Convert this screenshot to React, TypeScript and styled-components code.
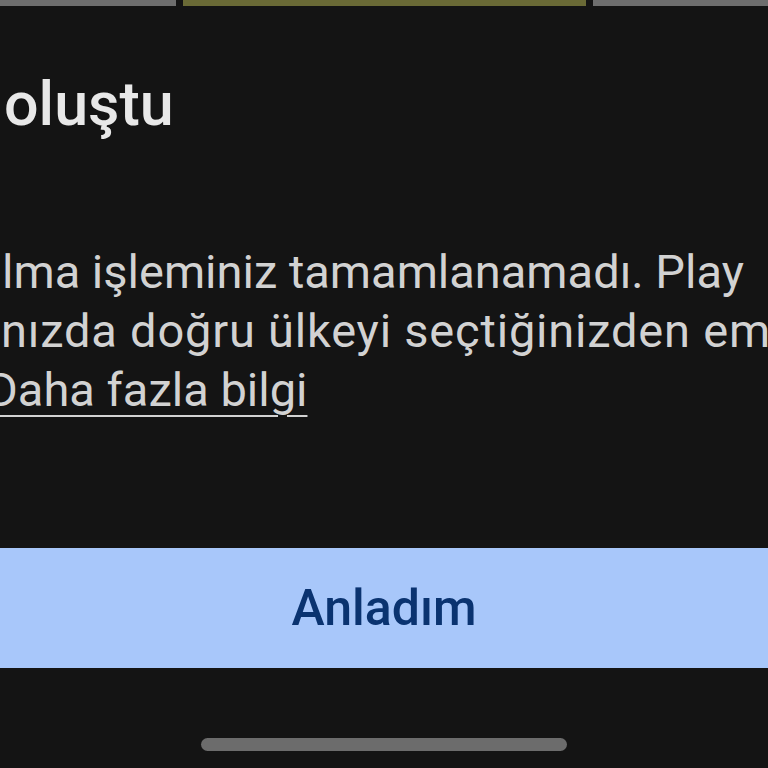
import { styled, createGlobalStyle } from "styled-components";

const GlobalStyle = createGlobalStyle`
    html, body {
        margin: 0;
        padding: 0;
        background: #141414;
        overflow: hidden;
    }
`;

const Page = styled.div`
    width: 768px;
    height: 768px;
    display: flex;
    flex-direction: column;
    background: #141414;
    overflow: hidden;
    font-family: Roboto, "Noto Sans", sans-serif;
`;

const Progress = styled.div`
    display: flex;
    gap: 7px;
    height: 6px;
`;

const Segment = styled.div<{ $grow: number; $active?: boolean }>`
    flex: ${(p) => p.$grow};
    background: ${(p) => (p.$active ? "#6a6a36" : "#6e6e6e")};
`;

const Title = styled.h1`
    margin: 63px 0 0 4px;
    font-size: 61px;
    line-height: 70px;
    font-weight: 500;
    color: #e8e8e8;
    white-space: nowrap;
`;

const Body = styled.div`
    margin-top: 103px;
    display: flex;
    flex-direction: column;
`;

const Line = styled.div<{ $shift: number; $tracking?: number }>`
    font-size: 47px;
    line-height: 59px;
    color: #d2d2d2;
    white-space: nowrap;
    margin-left: ${(p) => p.$shift}px;
    letter-spacing: ${(p) => p.$tracking ?? 0}px;
`;

const Link = styled.span`
    text-decoration: underline;
    text-decoration-thickness: 2px;
    text-underline-offset: 9px;
`;

const Button = styled.button`
    margin-top: 129px;
    height: 120px;
    border: 0;
    background: #a8c7fa;
    color: #0a3370;
    font-family: Roboto, "Noto Sans", sans-serif;
    font-size: 50px;
    font-weight: 500;
    padding: 0;
`;

const HomeBar = styled.div`
    margin: 70px auto 0;
    width: 366px;
    height: 13px;
    border-radius: 7px;
    background: #6c6c6c;
`;

export default function App() {
    return (
        <>
            <GlobalStyle />
            <Page>
                <Progress>
                    <Segment $grow={176} />
                    <Segment $grow={402} $active />
                    <Segment $grow={175} />
                </Progress>
                <Title>oluştu</Title>
                <Body>
                    <Line $shift={2}>lma işleminiz tamamlanamadı. Play</Line>
                    <Line $shift={1} $tracking={0.8}>nızda doğru ülkeyi seçtiğinizden emin</Line>
                    <Line $shift={-13}>
                        <Link>Daha fazla bilgi</Link>
                    </Line>
                </Body>
                <Button>Anladım</Button>
                <HomeBar />
            </Page>
        </>
    );
}
